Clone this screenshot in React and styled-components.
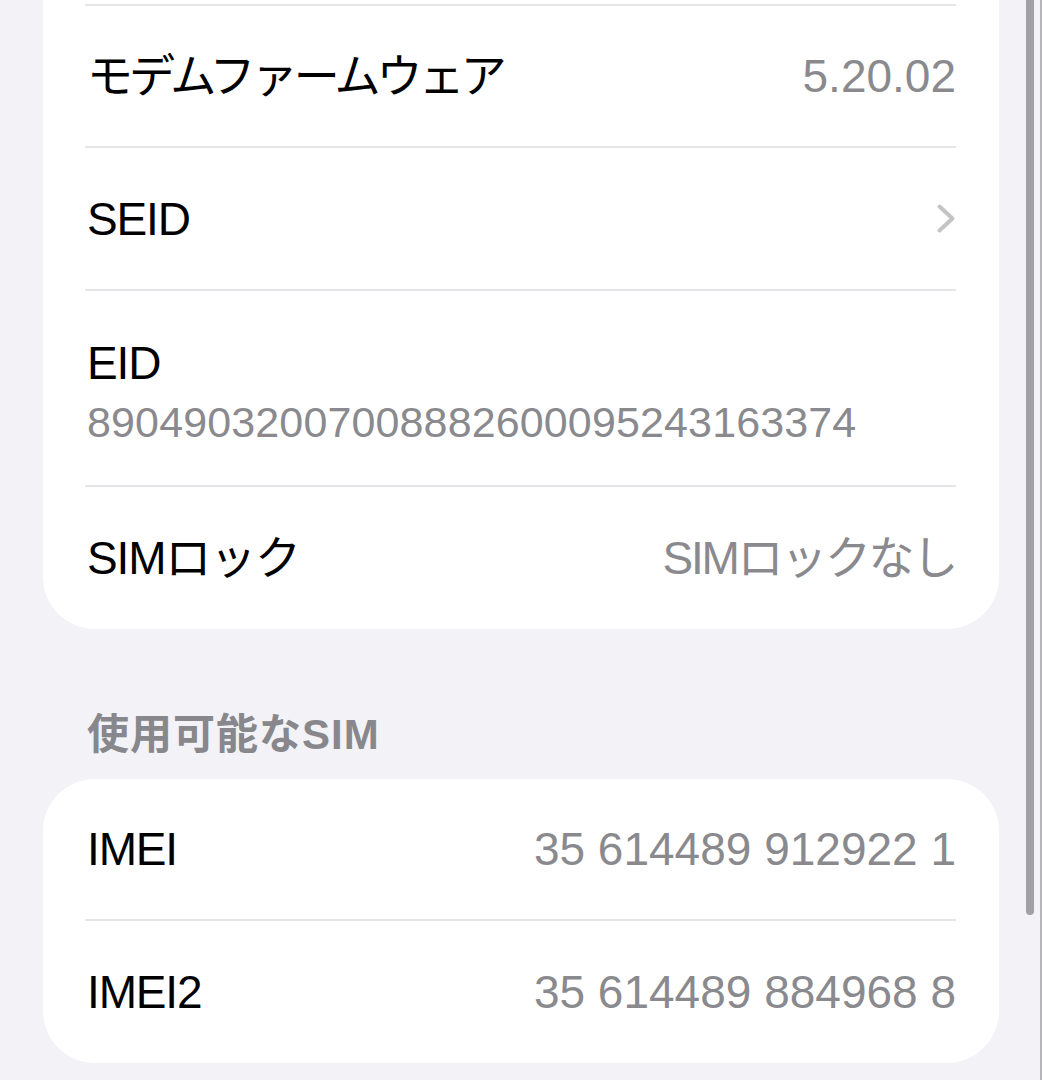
import React from "react";
import styled, { createGlobalStyle } from "styled-components";

const GlobalStyle = createGlobalStyle`
  html, body {
    margin: 0;
    padding: 0;
    background: #f2f2f7;
    overflow: hidden;
    font-family: "Liberation Sans", "Noto Sans CJK JP", sans-serif;
    -webkit-font-smoothing: antialiased;
  }
`;

const sections = [
  {
    cutTop: true,
    rows: [
      { label: "モデムファームウェア", value: "5.20.02", cjkLabel: true },
      { label: "SEID", chevron: true },
      { label: "EID", sub: "89049032007008882600095243163374" },
      { label: "SIMロック", value: "SIMロックなし", cjk: true },
    ],
  },
  {
    header: "使用可能なSIM",
    rows: [
      { label: "IMEI", value: "35 614489 912922 1" },
      { label: "IMEI2", value: "35 614489 884968 8" },
    ],
  },
];

function Chevron() {
  return (
    <svg width="20" height="31" viewBox="0 0 20 31">
      <polyline
        points="3.5,3.5 16.5,15.5 3.5,27.5"
        fill="none"
        stroke="#c4c4c7"
        strokeWidth="4"
        strokeLinecap="round"
        strokeLinejoin="round"
      />
    </svg>
  );
}

function App() {
  return (
    <Page>
      <GlobalStyle />
      {sections.map((section, i) => (
        <Section key={i}>
          {section.header && <Header>{section.header}</Header>}
          <Card $cutTop={section.cutTop}>
            {section.rows.map((row) =>
              row.sub ? (
                <StackRow key={row.label}>
                  <Label>{row.label}</Label>
                  <Sub>{row.sub}</Sub>
                </StackRow>
              ) : (
                <Row key={row.label} $cutTop={section.cutTop}>
                  <Label $cjk={row.cjkLabel}>{row.label}</Label>
                  {row.value && <Value $cjk={row.cjk}>{row.value}</Value>}
                  {row.chevron && <Chevron />}
                </Row>
              )
            )}
          </Card>
        </Section>
      ))}
      <ScrollThumb />
      <EdgeLine />
    </Page>
  );
}

const Page = styled.div`
  padding: 0 43px 40px;
`;

const Section = styled.section`
  display: flex;
  flex-direction: column;
`;

const Header = styled.div`
  padding: 78px 44px 16px;
  font-size: 42px;
  line-height: 56px;
  font-weight: 700;
  color: #87878c;
  letter-spacing: 1px;
`;

const Card = styled.div`
  background: #fff;
  border-radius: 52px;
  margin-top: ${(p) => (p.$cutTop ? "-60px" : "0")};
  padding-top: ${(p) => (p.$cutTop ? "64px" : "0")};
`;

const Row = styled.div`
  display: flex;
  align-items: center;
  justify-content: space-between;
  height: 141px;
  margin: 0 43px 0 42px;
  padding-left: 2px;
  border-top: 2px solid #e4e4e9;
  &:first-child {
    border-top: ${(p) => (p.$cutTop ? "2px solid #e4e4e9" : "none")};
    height: 140px;
  }
  &:last-child {
    height: 142px;
  }
`;

const StackRow = styled.div`
  display: flex;
  flex-direction: column;
  gap: 5px;
  padding: 44px 0 37px 2px;
  margin: 0 43px 0 42px;
  border-top: 2px solid #e4e4e9;
`;

const Label = styled.span`
  font-size: 46px;
  line-height: 56px;
  color: #000;
  letter-spacing: ${(p) => (p.$cjk ? "-0.085em" : "-0.025em")};
  white-space: nowrap;
`;

const Value = styled.span`
  font-size: 46px;
  line-height: 56px;
  color: #8a8a8e;
  letter-spacing: ${(p) => (p.$cjk ? "-0.05em" : "0")};
  white-space: nowrap;
`;

const Sub = styled.span`
  font-size: 43px;
  line-height: 52px;
  color: #8a8a8e;
  letter-spacing: 0.003em;
  white-space: nowrap;
`;

const ScrollThumb = styled.div`
  position: fixed;
  top: -10px;
  right: 8px;
  width: 8px;
  height: 925px;
  border-radius: 4px;
  background: #a0a0a5;
`;

const EdgeLine = styled.div`
  position: fixed;
  top: 0;
  right: 0;
  width: 2px;
  height: 100%;
  background: #b5b5ba;
`;

export default App;
